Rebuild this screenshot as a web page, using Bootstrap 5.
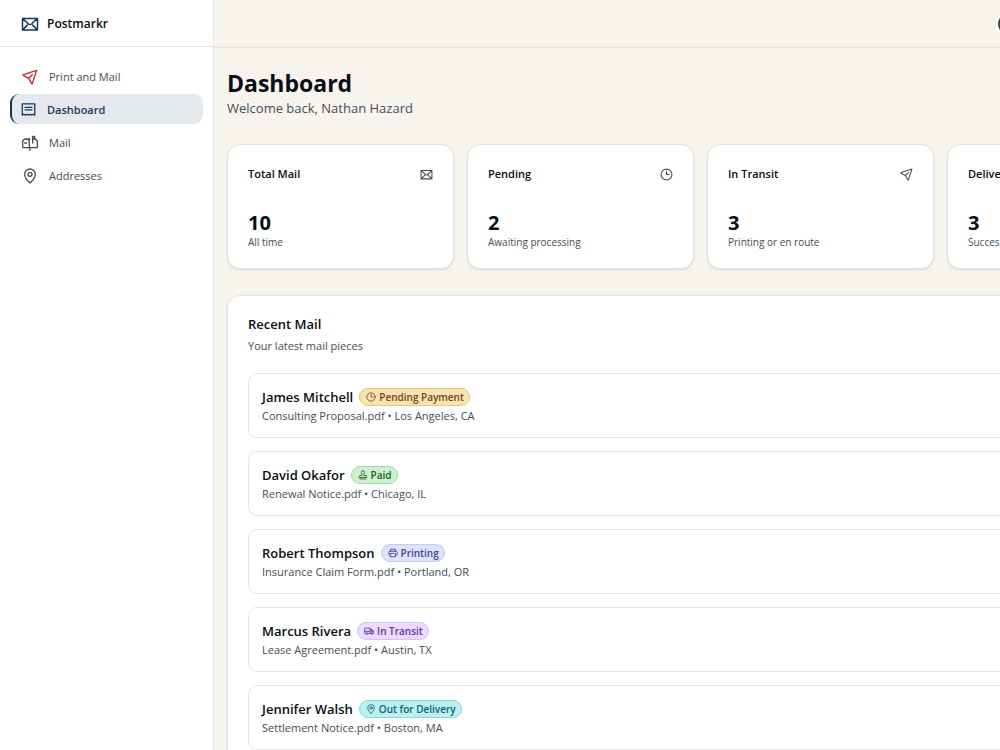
<!DOCTYPE html>
<html lang="en">
<head>
<meta charset="utf-8">
<meta name="viewport" content="width=device-width, initial-scale=1">
<title>Postmarkr</title>
<link href="https://cdn.jsdelivr.net/npm/bootstrap@5.3.0/dist/css/bootstrap.min.css" rel="stylesheet">
<style>
:root{--ink:#080e16;--soft:#434d59;--navy:#17365d;--cream:#f7f4ed;--line:#e6e3dc}
body{font-family:"Open Sans","Noto Sans",sans-serif;background:var(--cream);color:var(--ink);font-size:11px;line-height:18px}
svg{fill:none;stroke:currentColor;stroke-width:2;stroke-linecap:round;stroke-linejoin:round;flex:none}
.shell{overflow:hidden}
.side{width:214px;background:#fff;border-right:1px solid var(--line)}
.brand-bar{height:47px;padding:1px 21px 0;border-bottom:1px solid var(--line);font-size:12px;font-weight:600;gap:8px;color:var(--ink)}
.brand-bar svg{color:var(--navy)}
.side .nav{padding:14px 10px;gap:3px}
.side .nav-link{height:30px;padding:1px 12px 0;gap:11px;border-radius:9px;color:var(--soft);font-size:11px}
.side .nav-link.active{background:#e5e9ee;color:var(--navy);font-weight:600;border-left:2px solid var(--navy);padding-left:9px}
.side .send{color:#cf2433}
.topbar{height:48px;border-bottom:1px solid var(--line)}
.wide{min-width:973px}
.topbar button{width:26px;height:26px;border:2px solid #fff;background:#3b3f46;margin-right:165px}
.board{padding:20px 13px}
h1{font-size:23px;line-height:31px;font-weight:700}
.welcome{font-size:13px;line-height:18px;color:var(--soft)}
.stats{display:grid;grid-template-columns:repeat(4,1fr);gap:13px;margin:27px 0 26px}
.panel{background:#fff;border:1px solid var(--line);border-radius:13px;box-shadow:0 1px 2px rgba(0,0,0,.12);padding:20px}
.stats h2{font-size:11px;line-height:18px;font-weight:600}
.stats svg,.note{color:var(--soft)}
.figure-num{font-size:20px;line-height:26px;font-weight:700;margin-top:27px}
.note{font-size:10px;line-height:12px}
.recent h2{font-size:13px;line-height:16px;font-weight:600}
.recent .hint{line-height:18px;color:var(--soft);margin:5px 0 18px}
.pieces{gap:13px}
.piece{border:1px solid #e9e7e3;border-radius:9px;padding:13px;height:65px}
.piece h3{font-size:13px;line-height:20px;font-weight:600;margin:0 6px 0 0}
.piece p{line-height:18px;color:var(--soft)}
.state{height:18px;border:1px solid;border-radius:9px;padding:0 5px 0 6px;gap:3px;font-size:10px;line-height:16px;font-weight:600}
.due{background:#f8e3b4;border-color:#e7c777;color:#694811}
.paid{background:#cff0cf;border-color:#a5d9a8;color:#125a24}
.print{background:#dde2ff;border-color:#c1caf8;color:#3f3f96}
.transit{background:#eadbff;border-color:#d9c1f7;color:#65329a}
.out{background:#baf0f0;border-color:#8cd8dc;color:#12616b}
</style>
</head>
<body>
<svg width="0" height="0" class="position-absolute" aria-hidden="true">
<symbol id="mail" viewBox="0 0 24 24"><path d="M2 4.500h20v15.500H2zM2.500 5l7.500 7q2 1.600 4 0l7.500-7M2.500 19.500l6-6M21.500 19.500l-6-6"/></symbol>
<symbol id="send" viewBox="0 0 24 24"><path d="M22 2 2 8.500q-.8.500 0 1.100L10 14l4.500 8q.6.700 1 0zM10 14l5.500-5.500"/></symbol>
<symbol id="receipt" viewBox="0 0 24 24"><path d="M2 3h20v18l-2.500-1.500L17 21l-2.500-1.500L12 21l-2.500-1.500L7 21l-2.500-1.500L2 21zM6.500 8.500h11M6.500 12.500h11"/></symbol>
<symbol id="mailbox" viewBox="0 0 24 24"><path d="M12 19H2q-1 0-1-1v-6a5 5 0 0 1 5-6h6M6 6a5 5 0 0 1 5 5v8M18 6a5 5 0 0 1 5 6v6q0 1-1 1H12M4 12h3M12 19v4M16 12V2h3v3h-3"/></symbol>
<symbol id="pin" viewBox="0 0 24 24"><path d="M12 22.500S4 15.500 4 9.500a8 8 0 0 1 16 0C20 15.500 12 22.500 12 22.500z"/><circle cx="12" cy="9.500" r="3"/></symbol>
<symbol id="clock" viewBox="0 0 24 24"><circle cx="12" cy="12" r="10"/><path d="M12 6v6h5"/></symbol>
<symbol id="stamp" viewBox="0 0 24 24"><path d="M9.500 13V9a4 4 0 1 1 5 0v4H19q2 0 2 2.500V18H3v-2.500Q3 13 5 13zM5 21.500h14"/></symbol>
<symbol id="printer" viewBox="0 0 24 24"><path d="M6 8V3h12v5M6 17H4q-2 0-2-2v-5q0-2 2-2h16q2 0 2 2v5q0 2-2 2h-2M6 13h12v8H6z"/></symbol>
<symbol id="truck" viewBox="0 0 24 24"><path d="M4 18H3q-1.500 0-1.500-1.500V7Q1.500 5 3.500 5h11v13H9M14.500 8h4l4 4.500V18H21M1.500 13h13M18 8v5h4M16 18h-1"/><circle cx="6.500" cy="18" r="2.200"/><circle cx="18.500" cy="18" r="2.200"/></symbol>
<symbol id="check" viewBox="0 0 24 24"><circle cx="12" cy="12" r="10"/><path d="m7 12 3.500 3.500L17 9"/></symbol>
</svg>
<div class="shell d-flex min-vh-100">
<aside class="side flex-shrink-0">
<a href="#" class="brand-bar d-flex align-items-center text-decoration-none"><svg width="18" height="18"><use href="#mail"/></svg>Postmarkr</a>
<nav class="nav flex-column">
<a href="#" class="nav-link d-flex align-items-center"><svg class="send" width="16" height="16"><use href="#send"/></svg>Print and Mail</a>
<a href="#" class="nav-link active d-flex align-items-center" aria-current="page"><svg width="15" height="15"><use href="#receipt"/></svg>Dashboard</a>
<a href="#" class="nav-link d-flex align-items-center"><svg width="16" height="16"><use href="#mailbox"/></svg>Mail</a>
<a href="#" class="nav-link d-flex align-items-center"><svg width="16" height="16"><use href="#pin"/></svg>Addresses</a>
</nav>
</aside>
<div class="wide flex-grow-1">
<header class="topbar d-flex align-items-center justify-content-end"><button class="rounded-circle p-0" type="button" aria-label="Account"></button></header>
<main class="board">
<h1 class="mb-0">Dashboard</h1>
<p class="welcome mb-0">Welcome back, Nathan Hazard</p>
<section class="stats">
<article class="panel"><div class="d-flex justify-content-between align-items-center"><h2 class="mb-0">Total Mail</h2><svg width="13" height="13"><use href="#mail"/></svg></div><div class="figure-num">10</div><div class="note">All time</div></article>
<article class="panel"><div class="d-flex justify-content-between align-items-center"><h2 class="mb-0">Pending</h2><svg width="13" height="13"><use href="#clock"/></svg></div><div class="figure-num">2</div><div class="note">Awaiting processing</div></article>
<article class="panel"><div class="d-flex justify-content-between align-items-center"><h2 class="mb-0">In Transit</h2><svg width="13" height="13"><use href="#send"/></svg></div><div class="figure-num">3</div><div class="note">Printing or en route</div></article>
<article class="panel"><div class="d-flex justify-content-between align-items-center"><h2 class="mb-0">Delivered</h2><svg width="13" height="13"><use href="#check"/></svg></div><div class="figure-num">3</div><div class="note">Successfully delivered</div></article>
</section>
<section class="panel recent">
<h2 class="mb-0">Recent Mail</h2>
<p class="hint">Your latest mail pieces</p>
<div class="pieces d-flex flex-column">
<article class="piece"><div class="d-flex align-items-center"><h3>James Mitchell</h3><span class="state due d-flex align-items-center"><svg width="10" height="10"><use href="#clock"/></svg>Pending Payment</span></div><p class="mb-0">Consulting Proposal.pdf • Los Angeles, CA</p></article>
<article class="piece"><div class="d-flex align-items-center"><h3>David Okafor</h3><span class="state paid d-flex align-items-center"><svg width="10" height="10"><use href="#stamp"/></svg>Paid</span></div><p class="mb-0">Renewal Notice.pdf • Chicago, IL</p></article>
<article class="piece"><div class="d-flex align-items-center"><h3>Robert Thompson</h3><span class="state print d-flex align-items-center"><svg width="10" height="10"><use href="#printer"/></svg>Printing</span></div><p class="mb-0">Insurance Claim Form.pdf • Portland, OR</p></article>
<article class="piece"><div class="d-flex align-items-center"><h3>Marcus Rivera</h3><span class="state transit d-flex align-items-center"><svg width="10" height="10"><use href="#truck"/></svg>In Transit</span></div><p class="mb-0">Lease Agreement.pdf • Austin, TX</p></article>
<article class="piece"><div class="d-flex align-items-center"><h3>Jennifer Walsh</h3><span class="state out d-flex align-items-center"><svg width="10" height="10"><use href="#pin"/></svg>Out for Delivery</span></div><p class="mb-0">Settlement Notice.pdf • Boston, MA</p></article>
</div>
</section>
</main>
</div>
</div>
<script src="https://cdn.jsdelivr.net/npm/bootstrap@5.3.0/dist/js/bootstrap.bundle.min.js"></script>
</body>
</html>
